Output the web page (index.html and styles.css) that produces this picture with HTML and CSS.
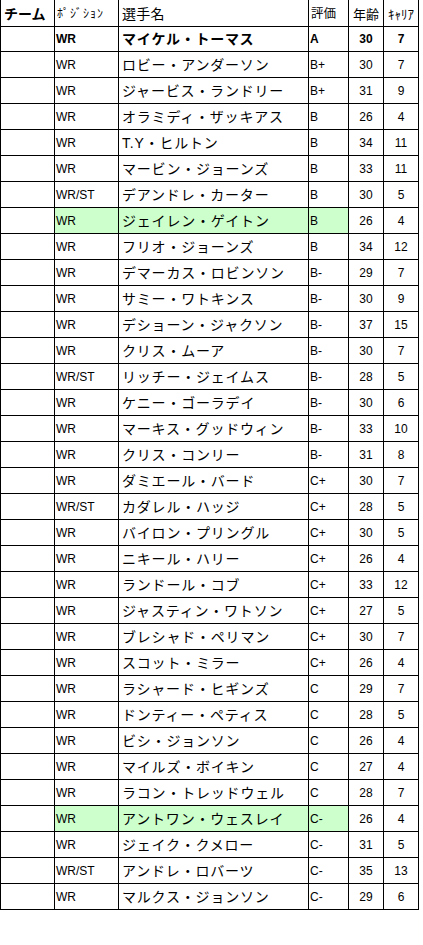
FILE: index.html
```html
<!DOCTYPE html>
<html lang="ja">
<head>
<meta charset="utf-8">
<title>WR</title>
<link rel="stylesheet" href="styles.css">
</head>
<body>
<div class="sheet">
  <div class="row head">
    <div class="c team">チーム</div>
    <div class="c pos">ﾎﾟｼﾞｼｮﾝ</div>
    <div class="c name">選手名</div>
    <div class="c rate">評価</div>
    <div class="c num">年齢</div>
    <div class="c num half">ｷｬﾘｱ</div>
  </div>
  <div class="row bold"><div class="c team"></div><div class="c pos">WR</div><div class="c name">マイケル・トーマス</div><div class="c rate">A</div><div class="c num">30</div><div class="c num">7</div></div>
  <div class="row"><div class="c team"></div><div class="c pos">WR</div><div class="c name">ロビー・アンダーソン</div><div class="c rate">B+</div><div class="c num">30</div><div class="c num">7</div></div>
  <div class="row"><div class="c team"></div><div class="c pos">WR</div><div class="c name">ジャービス・ランドリー</div><div class="c rate">B+</div><div class="c num">31</div><div class="c num">9</div></div>
  <div class="row"><div class="c team"></div><div class="c pos">WR</div><div class="c name">オラミディ・ザッキアス</div><div class="c rate">B</div><div class="c num">26</div><div class="c num">4</div></div>
  <div class="row"><div class="c team"></div><div class="c pos">WR</div><div class="c name">T.Y・ヒルトン</div><div class="c rate">B</div><div class="c num">34</div><div class="c num">11</div></div>
  <div class="row"><div class="c team"></div><div class="c pos">WR</div><div class="c name">マービン・ジョーンズ</div><div class="c rate">B</div><div class="c num">33</div><div class="c num">11</div></div>
  <div class="row"><div class="c team"></div><div class="c pos">WR/ST</div><div class="c name">デアンドレ・カーター</div><div class="c rate">B</div><div class="c num">30</div><div class="c num">5</div></div>
  <div class="row hl"><div class="c team"></div><div class="c pos">WR</div><div class="c name">ジェイレン・ゲイトン</div><div class="c rate">B</div><div class="c num">26</div><div class="c num">4</div></div>
  <div class="row"><div class="c team"></div><div class="c pos">WR</div><div class="c name">フリオ・ジョーンズ</div><div class="c rate">B</div><div class="c num">34</div><div class="c num">12</div></div>
  <div class="row"><div class="c team"></div><div class="c pos">WR</div><div class="c name">デマーカス・ロビンソン</div><div class="c rate">B-</div><div class="c num">29</div><div class="c num">7</div></div>
  <div class="row"><div class="c team"></div><div class="c pos">WR</div><div class="c name">サミー・ワトキンス</div><div class="c rate">B-</div><div class="c num">30</div><div class="c num">9</div></div>
  <div class="row"><div class="c team"></div><div class="c pos">WR</div><div class="c name">デショーン・ジャクソン</div><div class="c rate">B-</div><div class="c num">37</div><div class="c num">15</div></div>
  <div class="row"><div class="c team"></div><div class="c pos">WR</div><div class="c name">クリス・ムーア</div><div class="c rate">B-</div><div class="c num">30</div><div class="c num">7</div></div>
  <div class="row"><div class="c team"></div><div class="c pos">WR/ST</div><div class="c name">リッチー・ジェイムス</div><div class="c rate">B-</div><div class="c num">28</div><div class="c num">5</div></div>
  <div class="row"><div class="c team"></div><div class="c pos">WR</div><div class="c name">ケニー・ゴーラデイ</div><div class="c rate">B-</div><div class="c num">30</div><div class="c num">6</div></div>
  <div class="row"><div class="c team"></div><div class="c pos">WR</div><div class="c name">マーキス・グッドウィン</div><div class="c rate">B-</div><div class="c num">33</div><div class="c num">10</div></div>
  <div class="row"><div class="c team"></div><div class="c pos">WR</div><div class="c name">クリス・コンリー</div><div class="c rate">B-</div><div class="c num">31</div><div class="c num">8</div></div>
  <div class="row"><div class="c team"></div><div class="c pos">WR</div><div class="c name">ダミエール・バード</div><div class="c rate">C+</div><div class="c num">30</div><div class="c num">7</div></div>
  <div class="row"><div class="c team"></div><div class="c pos">WR/ST</div><div class="c name">カダレル・ハッジ</div><div class="c rate">C+</div><div class="c num">28</div><div class="c num">5</div></div>
  <div class="row"><div class="c team"></div><div class="c pos">WR</div><div class="c name">バイロン・プリングル</div><div class="c rate">C+</div><div class="c num">30</div><div class="c num">5</div></div>
  <div class="row"><div class="c team"></div><div class="c pos">WR</div><div class="c name">ニキール・ハリー</div><div class="c rate">C+</div><div class="c num">26</div><div class="c num">4</div></div>
  <div class="row"><div class="c team"></div><div class="c pos">WR</div><div class="c name">ランドール・コブ</div><div class="c rate">C+</div><div class="c num">33</div><div class="c num">12</div></div>
  <div class="row"><div class="c team"></div><div class="c pos">WR</div><div class="c name">ジャスティン・ワトソン</div><div class="c rate">C+</div><div class="c num">27</div><div class="c num">5</div></div>
  <div class="row"><div class="c team"></div><div class="c pos">WR</div><div class="c name">ブレシャド・ペリマン</div><div class="c rate">C+</div><div class="c num">30</div><div class="c num">7</div></div>
  <div class="row"><div class="c team"></div><div class="c pos">WR</div><div class="c name">スコット・ミラー</div><div class="c rate">C+</div><div class="c num">26</div><div class="c num">4</div></div>
  <div class="row"><div class="c team"></div><div class="c pos">WR</div><div class="c name">ラシャード・ヒギンズ</div><div class="c rate">C</div><div class="c num">29</div><div class="c num">7</div></div>
  <div class="row"><div class="c team"></div><div class="c pos">WR</div><div class="c name">ドンティー・ペティス</div><div class="c rate">C</div><div class="c num">28</div><div class="c num">5</div></div>
  <div class="row"><div class="c team"></div><div class="c pos">WR</div><div class="c name">ビシ・ジョンソン</div><div class="c rate">C</div><div class="c num">26</div><div class="c num">4</div></div>
  <div class="row"><div class="c team"></div><div class="c pos">WR</div><div class="c name">マイルズ・ボイキン</div><div class="c rate">C</div><div class="c num">27</div><div class="c num">4</div></div>
  <div class="row"><div class="c team"></div><div class="c pos">WR</div><div class="c name">ラコン・トレッドウェル</div><div class="c rate">C</div><div class="c num">28</div><div class="c num">7</div></div>
  <div class="row hl"><div class="c team"></div><div class="c pos">WR</div><div class="c name">アントワン・ウェスレイ</div><div class="c rate">C-</div><div class="c num">26</div><div class="c num">4</div></div>
  <div class="row"><div class="c team"></div><div class="c pos">WR</div><div class="c name">ジェイク・クメロー</div><div class="c rate">C-</div><div class="c num">31</div><div class="c num">5</div></div>
  <div class="row"><div class="c team"></div><div class="c pos">WR/ST</div><div class="c name">アンドレ・ロバーツ</div><div class="c rate">C-</div><div class="c num">35</div><div class="c num">13</div></div>
  <div class="row"><div class="c team"></div><div class="c pos">WR</div><div class="c name">マルクス・ジョンソン</div><div class="c rate">C-</div><div class="c num">29</div><div class="c num">6</div></div>
</div>
</body>
</html>
```

FILE: styles.css
```css
html, body {
  margin: 0;
  padding: 0;
  background: #fff;
}

body {
  font-family: "Liberation Sans", "Noto Sans CJK JP", sans-serif;
  color: #000;
}

.sheet {
  display: grid;
  grid-template-columns: 54px 64px 190px 40px 35px 35px;
  grid-auto-rows: 26px;
  width: 418px;
  border-left: 1px solid #000;
}

.row {
  display: contents;
}

.c {
  box-sizing: border-box;
  border-right: 1px solid #000;
  border-bottom: 1px solid #000;
  display: flex;
  align-items: center;
  white-space: nowrap;
  overflow: hidden;
  font-size: 12px;
  line-height: 1;
}

.head .c {
  height: 27px;
  align-self: start;
}

.pos {
  padding-left: 1px;
}

.name {
  padding-left: 3px;
  font-family: "Liberation Sans", "Noto Sans CJK JP", sans-serif;
  font-size: 14px;
  letter-spacing: 0.8px;
}

.rate {
  padding-left: 1px;
}

.num {
  justify-content: center;
}

.bold .c {
  font-weight: bold;
}

.bold .name {
  letter-spacing: 0.7px;
}

.hl .pos,
.hl .name,
.hl .rate {
  background: #ccffcc;
}

/* header */
.head .team {
  padding-left: 3px;
  font-family: "Noto Sans CJK JP", sans-serif;
  font-weight: bold;
  font-size: 14px;
}

.head .pos {
  padding-left: 2px;
  font-family: "Noto Sans CJK JP", sans-serif;
  font-size: 12px;
  letter-spacing: 1px;
}

.head .name {
  font-family: "Noto Sans CJK JP", sans-serif;
  letter-spacing: 0.3px;
}

.head .rate {
  padding-left: 2px;
  font-family: "Noto Sans CJK JP", sans-serif;
  font-size: 12.5px;
}

.head .num {
  font-family: "Noto Sans CJK JP", sans-serif;
  font-size: 13px;
}
```
